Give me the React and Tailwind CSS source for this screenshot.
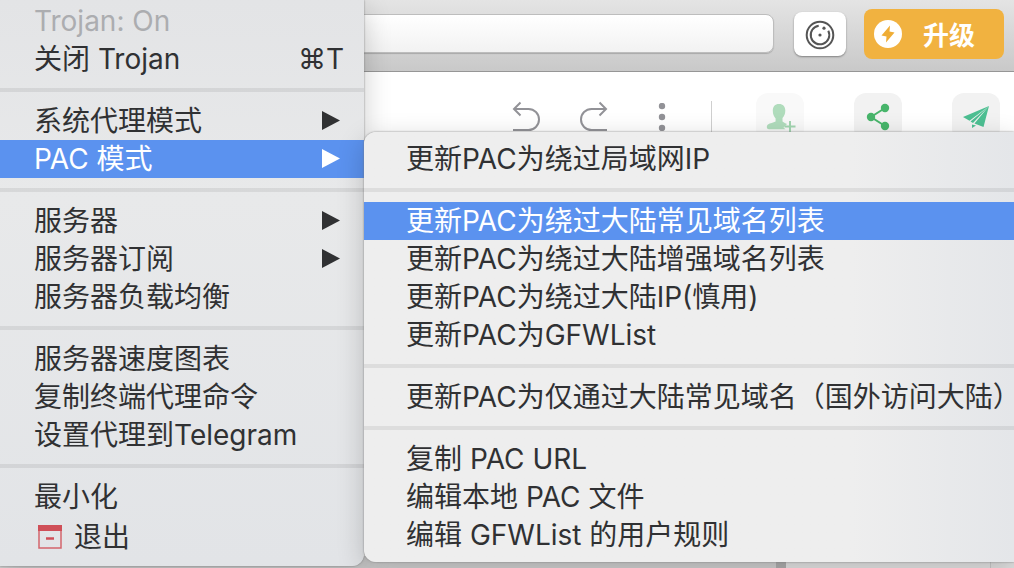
import clsx from "clsx";

const mainMenu = [
  { label: "Trojan: On", disabled: true },
  { label: "关闭 Trojan", shortcut: "⌘T" },
  { divider: true },
  { label: "系统代理模式", submenu: true },
  { label: "PAC 模式", submenu: true, active: true },
  { divider: true },
  { label: "服务器", submenu: true },
  { label: "服务器订阅", submenu: true },
  { label: "服务器负载均衡" },
  { divider: true },
  { label: "服务器速度图表" },
  { label: "复制终端代理命令" },
  { label: "设置代理到Telegram" },
  { divider: true },
  { label: "最小化" },
  { label: "退出", quit: true },
];

const pacMenu = [
  { label: "更新PAC为绕过局域网IP" },
  { divider: true },
  { label: "更新PAC为绕过大陆常见域名列表", active: true },
  { label: "更新PAC为绕过大陆增强域名列表" },
  { label: "更新PAC为绕过大陆IP(慎用)" },
  { label: "更新PAC为GFWList" },
  { divider: true },
  { label: "更新PAC为仅通过大陆常见域名（国外访问大陆）" },
  { divider: true },
  { label: "复制 PAC URL" },
  { label: "编辑本地 PAC 文件" },
  { label: "编辑 GFWList 的用户规则" },
];

const QuitIcon = () => (
  <svg className="ml-1 mr-3 h-6 w-6 shrink-0" viewBox="0 0 24 24" fill="none">
    <path d="M1 1h22v22H1z" stroke="#d4646c" strokeWidth="1.5" />
    <path d="M0 0h24v6H0z" fill="#cf4f58" />
    <path d="M8 13.5h8" stroke="#cf4f58" strokeWidth="2.5" />
  </svg>
);

const Arrow = () => (
  <svg className="mr-6 h-5 w-[18px] shrink-0" viewBox="0 0 18 20" fill="currentColor">
    <path d="M0 0l18 9.5L0 19z" />
  </svg>
);

const MenuItem = ({ item, indent }) => (
  <li>
    <button
      type="button"
      disabled={item.disabled}
      className={clsx(
        "flex w-full items-center whitespace-nowrap text-left text-[28px]",
        indent,
        item.quit ? "h-[42px]" : "h-[38px]",
        item.active && "bg-[#5b92ef] text-white",
        item.disabled && "text-[#acadb0]"
      )}
    >
      {item.quit && <QuitIcon />}
      <span className="flex-1">{item.label}</span>
      {item.shortcut && <span className="pr-5">{item.shortcut}</span>}
      {item.submenu && <Arrow />}
    </button>
  </li>
);

const Menu = ({ items, indent, className }) => (
  <ul className={className}>
    {items.map((item, idx) =>
      item.divider ? (
        <li key={idx} className="py-2.5">
          <hr className="h-1 border-0 bg-black/7" />
        </li>
      ) : (
        <MenuItem key={idx} item={item} indent={indent} />
      )
    )}
  </ul>
);

const UndoIcon = ({ className }) => (
  <svg className={className} viewBox="0 0 28 30" fill="none" stroke="#929297" strokeWidth="2">
    <path d="M8.500 1.500L2 8l6.500 6.500M2 8h14.500a10.500 10.500 0 0 1 0 21H1" />
  </svg>
);

const BrowserBar = () => (
  <header className="flex h-[72px] items-center border-b border-[#969696] bg-linear-to-b from-[#e4e4e4] to-[#c9c9c9] pb-1 pr-2.5">
    <input
      type="text"
      aria-label="地址"
      className="mr-5 h-[39px] min-w-0 flex-1 rounded-lg border border-[#bdbdbd] bg-linear-to-b from-white to-[#f2f2f2] shadow-[0_1px_1px_#a8a8a8]"
    />
    <button
      type="button"
      aria-label="扩展"
      className="mr-[18px] flex h-11 w-[52px] items-center justify-center rounded-lg bg-white shadow-[0_1px_2px_#808080]"
    >
      <svg className="mt-0.5 h-[30px] w-[30px]" viewBox="0 0 30 30" fill="none" stroke="#555" strokeWidth="2">
        <circle cx="15" cy="15" r="13.3" />
        <path d="M23.8 12a9.300 9.300 0 1 1-8.800-6.300" transform="rotate(-8 15 15)" />
        <circle cx="15" cy="15" r="1.6" fill="#555" stroke="none" />
        <circle cx="19" cy="8.200" r="1.6" fill="#555" stroke="none" />
      </svg>
    </button>
    <button
      type="button"
      className="flex h-[50px] w-[140px] items-center rounded-lg bg-[#f1b240] pl-2.5 text-[26px] font-bold text-white"
    >
      <svg className="mr-[21px] h-7 w-7" viewBox="0 0 28 28">
        <circle cx="14" cy="14" r="14" fill="#fff" />
        <path d="M16 5.500L7.500 15.500l5 1L12 22.500l8.500-10-5-1z" fill="#efad35" />
      </svg>
      <span className="pt-1">升级</span>
    </button>
  </header>
);

const tile = "flex h-12 w-12 justify-center rounded-xl pt-2";

const EditorBar = () => (
  <div className="flex flex-1 items-start justify-end bg-white pr-3.5 pt-[21px]">
    <button type="button" aria-label="撤销" className="mr-10 mt-2">
      <UndoIcon className="h-[30px] w-7" />
    </button>
    <button type="button" aria-label="重做" className="mr-[50px] mt-2">
      <UndoIcon className="h-[30px] w-7 -scale-x-100" />
    </button>
    <button type="button" aria-label="更多" className="mr-[45px] mt-2.5">
      <svg className="h-7 w-2" viewBox="0 0 8 28" fill="#929297">
        <circle cx="4" cy="3" r="3.200" />
        <circle cx="4" cy="14" r="3.200" />
        <circle cx="4" cy="25" r="3.200" />
      </svg>
    </button>
    <div className="mr-11 mt-2 h-10 w-px bg-[#cfcfcf]" />
    <button type="button" aria-label="邀请" className={clsx(tile, "mr-[50px] bg-[#f9f9f9]")}>
      <svg className="h-9 w-8" viewBox="0 0 32 36" fill="#b0dcbc">
        <path d="M15 3c4 0 6.300 2.700 6.300 6.500 0 3.300-1 5.800-2.800 7.600v3.400c1.500 1.200 3 1.800 4.500 2.500l-3.500 3.500 2 1.800H5c-2.700 0-2.700-3.500-1-4.700 2-1.400 5.300-1.800 7.600-3v-3.200c-1.800-1.800-2.800-4.300-2.800-7.600C8.800 5.700 11 3 15 3z" />
        <path d="M20.500 25.500h11M26 20v12" stroke="#a3d6b1" strokeWidth="2" />
      </svg>
    </button>
    <button type="button" aria-label="分享" className={clsx(tile, "mr-[50px] bg-[#f2f2f2]")}>
      <svg className="h-8 w-7" viewBox="0 0 28 32" fill="#48b56b">
        <path d="M21 7L7 16l14 9" fill="none" stroke="#48b56b" strokeWidth="2" />
        <circle cx="21" cy="7" r="4.200" />
        <circle cx="7" cy="16" r="4.200" />
        <circle cx="21" cy="25" r="4.200" />
      </svg>
    </button>
    <button type="button" aria-label="发送" className={clsx(tile, "bg-[#f2f2f2]")}>
      <svg className="h-8 w-7" viewBox="0 0 28 32" fill="#4dbf92">
        <path d="M27 5L1 16l6.500 3.700zM27 5L8.500 20.500l2.500 1.500zM27 5l-14.500 17.500 9 3.500zM10 23.500v3.500l4-2.500z" />
      </svg>
    </button>
  </div>
);

const App = () => {
  return (
    <div className="relative flex min-h-screen flex-col overflow-hidden bg-white font-[Inter,'Noto_Sans_CJK_SC',sans-serif] text-[#303133]">
      <BrowserBar />
      <EditorBar />
      <footer className="flex h-3 bg-[#d2d2d2]">
        <div className="ml-auto w-2.5 bg-[#b0b0b0]" />
        <div className="w-[205px] border-r border-[#cccccc] bg-[#e6e6e6]" />
        <div className="w-[23px] bg-[#e2e2e2]" />
      </footer>

      <div className="absolute inset-x-0 top-0 flex items-start">
        <Menu
          items={mainMenu}
          indent="pl-[34px]"
          className="w-[364px] shrink-0 rounded-br-xl bg-linear-to-b from-[#e3e4e6] via-[#e8e9ea] via-35% to-[#e2e4e7] pb-2 pt-0.5 shadow-[0_0_2px_#777,0_8px_28px_rgba(0,0,0,0.2)]"
        />
        <Menu
          items={pacMenu}
          indent="pl-[42px]"
          className="z-10 mt-[132px] min-w-0 flex-1 rounded-l-xl bg-linear-to-r from-[#eeeeee] from-75% to-[#e4e6e9] py-2 shadow-[0_0_2px_#777,0_8px_28px_rgba(0,0,0,0.2)]"
        />
      </div>
    </div>
  );
};

export default App;
